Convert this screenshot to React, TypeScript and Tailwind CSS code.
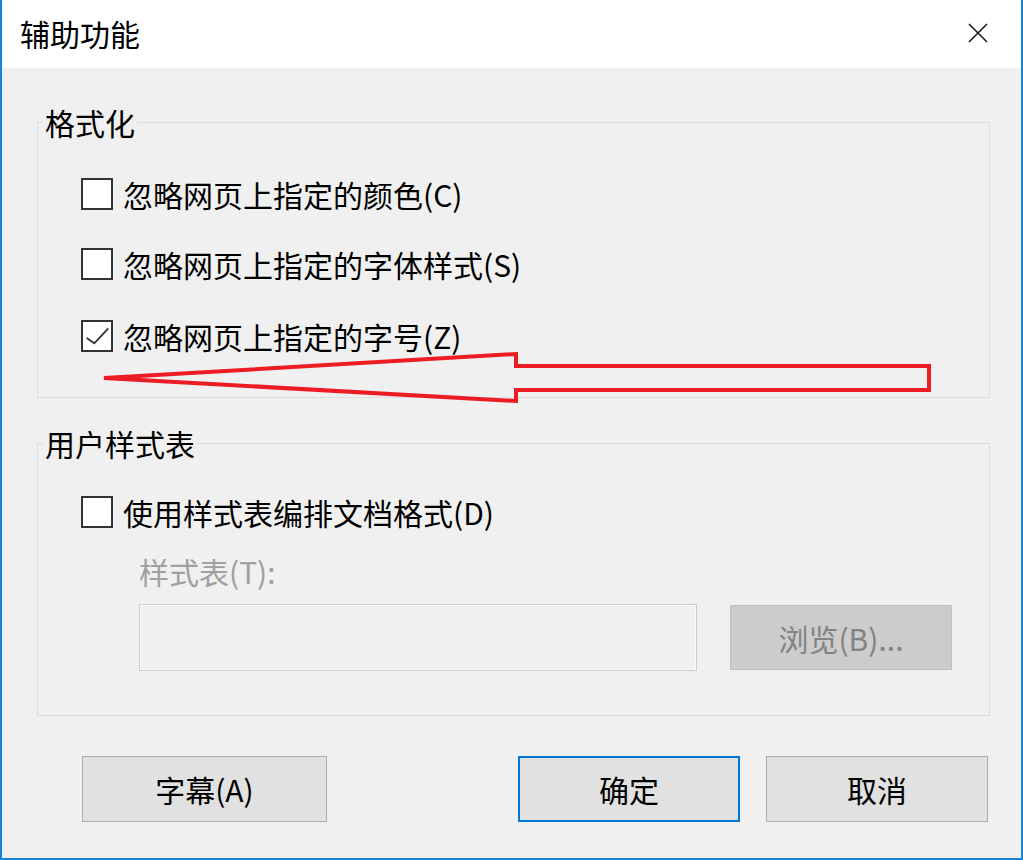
import React, { useState } from "react";

const FONT = "font-['Noto_Sans_CJK_SC','Noto_Sans',sans-serif]";

const FORMAT_OPTIONS = [
  { id: "color", label: "忽略网页上指定的颜色(C)", checked: false, gap: "mt-[38px]" },
  { id: "font", label: "忽略网页上指定的字体样式(S)", checked: false, gap: "mt-[38px]" },
  { id: "size", label: "忽略网页上指定的字号(Z)", checked: true, gap: "mt-[40px]" },
];

const CheckBox: React.FC<{ checked: boolean; onToggle: () => void }> = ({ checked, onToggle }) => (
  <button
    onClick={onToggle}
    className="size-[32px] shrink-0 border-2 border-[#333333] bg-white flex items-center justify-center"
  >
    {checked && (
      <svg width="28" height="28" viewBox="0 0 28 28">
        <path d="M3.7 16 L11.3 21.3 L25.3 6.3" fill="none" stroke="#333333" strokeWidth="1.8" />
      </svg>
    )}
  </button>
);

const CheckRow: React.FC<{ label: string; checked: boolean; onToggle: () => void; className?: string }> = ({
  label,
  checked,
  onToggle,
  className = "",
}) => (
  <div className={`h-[32px] flex items-center pl-[43px] ${className}`}>
    <CheckBox checked={checked} onToggle={onToggle} />
    <span className="ml-[10px] text-[30px] leading-[30px] text-black whitespace-nowrap">{label}</span>
  </div>
);

const App: React.FC = () => {
  const [checks, setChecks] = useState<Record<string, boolean>>(
    Object.fromEntries(FORMAT_OPTIONS.map((o) => [o.id, o.checked]))
  );
  const [useSheet, setUseSheet] = useState(false);

  return (
    <div
      className={`relative w-[1023px] h-[860px] flex flex-col bg-[#f0f0f0] border-l-2 border-r-2 border-b-2 border-[#1883d7] ${FONT}`}
    >
      {/* Title bar */}
      <div className="h-[68px] shrink-0 bg-white flex items-center justify-between pl-[18px] pr-[33px] pb-[3px]">
        <span className="text-[30px] leading-[36px] text-black">辅助功能</span>
        <svg width="20" height="20" viewBox="0 0 20 20">
          <path d="M1 1 L19 19 M19 1 L1 19" stroke="#1a1a1a" strokeWidth="1.6" />
        </svg>
      </div>

      {/* Formatting group */}
      <fieldset className="mt-[36px] ml-[35px] w-[953px] border border-[#dcdcdc] pb-[45px]">
        <legend className="ml-[5px] px-[2px] text-[30px] leading-[36px] text-black">格式化</legend>
        {FORMAT_OPTIONS.map((o) => (
          <CheckRow
            key={o.id}
            label={o.label}
            checked={checks[o.id]}
            onToggle={() => setChecks((c) => ({ ...c, [o.id]: !c[o.id] }))}
            className={o.gap}
          />
        ))}
      </fieldset>

      {/* User style sheet group */}
      <fieldset className="mt-[27px] ml-[35px] w-[953px] border border-[#dcdcdc] pb-[44px]">
        <legend className="ml-[5px] px-[2px] text-[30px] leading-[36px] text-black">用户样式表</legend>
        <CheckRow
          label="使用样式表编排文档格式(D)"
          checked={useSheet}
          onToggle={() => setUseSheet(!useSheet)}
          className="mt-[35px]"
        />
        <div className="mt-[28px] pl-[101px] text-[30px] leading-[30px] text-[#a0a0a0]">样式表(T):</div>
        <div className="mt-[18px] pl-[101px] flex items-center">
          <div className="w-[558px] h-[67px] border border-[#cccccc] shadow-[inset_0_0_0_1px_#fafafa] bg-[#f0f0f0]" />
          <button className="ml-[33px] w-[222px] h-[65px] bg-[#cccccc] border border-[#bfbfbf] text-[30px] leading-[30px] text-[#838383]">
            浏览(B)...
          </button>
        </div>
      </fieldset>

      {/* Dialog buttons */}
      <div className="mt-[40px] pl-[80px] flex items-center">
        <button className="w-[245px] h-[66px] bg-[#e1e1e1] border border-[#adadad] text-[30px] leading-[30px] text-black">
          字幕(A)
        </button>
        <button className="ml-[191px] w-[222px] h-[66px] bg-[#e1e1e1] border-2 border-[#0078d7] text-[30px] leading-[30px] text-black">
          确定
        </button>
        <button className="ml-[26px] w-[222px] h-[66px] bg-[#e1e1e1] border border-[#adadad] text-[30px] leading-[30px] text-black">
          取消
        </button>
      </div>

      {/* Red annotation arrow drawn over the dialog */}
      <svg className="absolute left-[-2px] top-0 pointer-events-none" width="1023" height="860" viewBox="0 0 1023 860">
        <polygon
          points="104,378 516,354 516,366 929,366 929,390 516,390 516,401"
          fill="none"
          stroke="#ed1c24"
          strokeWidth="4"
          strokeLinejoin="miter"
        />
      </svg>
    </div>
  );
};

export default App;
